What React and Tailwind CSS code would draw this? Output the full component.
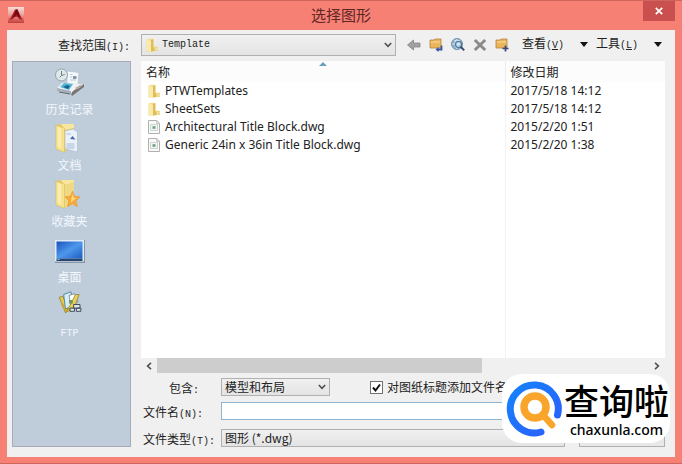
import React from "react";

const CJK = "font-['Noto_Sans_CJK_SC',sans-serif]";
const MONO = "font-['Liberation_Mono','Noto_Sans_CJK_SC',monospace] text-[10px]";
const LATIN = "font-['Noto_Sans','Noto_Sans_CJK_SC',sans-serif]";

function Mono({ children }) {
  return <span className={MONO}>{children}</span>;
}

function AppLogo() {
  return (
    <svg viewBox="0 0 16 16" className="size-4" aria-hidden="true">
      <defs>
        <linearGradient id="logo" x1="0" y1="0" x2="0" y2="1">
          <stop offset="0" stopColor="#f7dcd8" />
          <stop offset="0.45" stopColor="#eba7a0" />
          <stop offset="1" stopColor="#c43c3c" />
        </linearGradient>
      </defs>
      <rect width="16" height="16" fill="url(#logo)" />
      <path d="M1.5 13 7 2.5h2.5l5 10.5-3.5-1-1-2.2H6.5L5 12Z" fill="#bd1822" />
      <path d="M8 2.5h1.5L12 10l-2 .5L8.5 7 7 10l-2 .5Z" fill="#6c0d16" />
    </svg>
  );
}

function Folder({ className = "" }) {
  return (
    <svg viewBox="0 0 14 14" className={"size-3.5 " + className} aria-hidden="true">
      <path d="M1.500 1.500 5 .8h3v8h5v4L6 13.500H1.500Z" fill="#f3dc89" />
      <path d="M5 2.500 8.500 1v8.500L13 10v2.500L6 13.500Z" fill="#e0bd55" />
      <path d="M9.500 9.800 13 10v2.500l-3.500.500Z" fill="#f0dda0" />
      <path d="M1.500 1.500 6 2.800v10.700l-4.500-1Z" fill="#f9ebaf" />
    </svg>
  );
}

function DwgFile() {
  return (
    <svg viewBox="0 0 14 14" className="size-3.5" aria-hidden="true">
      <path d="M1.500.5h8.200l2.800 2.800v10.200h-11Z" fill="#fafafa" stroke="#b0b0b0" />
      <path d="M9.700.5v2.800h2.800" fill="none" stroke="#bdbdbd" />
      <path d="M3.500 4.500h7v6h-7z" fill="#f1f5f2" stroke="#cdd5cf" />
      <path d="M5.500 6.200h3v2.600h-3Z" fill="#6fa085" />
    </svg>
  );
}

function Chevron({ className = "" }) {
  return (
    <svg viewBox="0 0 8 6" className={"pointer-events-none h-1.5 w-2 " + className} aria-hidden="true">
      <path d="m.8 1 3.200 3.400L7.200 1" fill="none" stroke="#505050" strokeWidth="1.600" />
    </svg>
  );
}

function HistoryIcon() {
  return (
    <svg viewBox="0 0 32 32" className="size-8" aria-hidden="true">
      <path d="M13 5 25 6.500l-1 12-11-1Z" fill="#f5f8fa" stroke="#b3bfca" strokeWidth=".7" />
      <path d="M16 8.500h2.500M16 11h2M16 14h6" stroke="#b9c8d4" />
      <path d="M19 10h3.500v3H19z" fill="#7d9ab3" />
      <path d="m3 22 5-5 17 1 5 1-11 9-14-2Z" fill="#eef2f5" />
      <path d="m19 25 11-7v3l-12 9-1-2Z" fill="#7b7371" />
      <path d="m21 22 5-3 3 .5-6 4Z" fill="#b5aca6" />
      <path d="m6 21 4-4 9 1-4 6Z" fill="#56b6d6" />
      <path d="m9 21 4-2 3 1-2 3Z" fill="#17638e" />
      <path d="m3 22 14 3v3L3 25Z" fill="#a4afba" />
      <path d="m5 26 11 2" stroke="#5b6670" />
      <circle cx="7.500" cy="9" r="6" fill="#dfe9ea" stroke="#93a4ad" />
      <path d="M7.500 5v4.500l3.200-1M7.500 9.500l-2 2" fill="none" stroke="#6d808a" />
    </svg>
  );
}

function BigFolder({ children }) {
  return (
    <svg viewBox="0 0 32 32" className="size-8" aria-hidden="true">
      <path d="m3 3 5-1 12 1v23l-11 4-6-3Z" fill="#e3c768" />
      <path d="M7 2h13v4l-9 2Z" fill="#f7e69c" />
      {children}
      <path d="m2 3 8.500 3v24.500L2 27Z" fill="#f6e18c" stroke="#d2b759" strokeWidth=".5" />
      <path d="m3.500 5 3.500 1.200v20L3.500 25Z" fill="#fcf2be" opacity=".7" />
    </svg>
  );
}

function DocumentsIcon() {
  return (
    <BigFolder>
      <path d="m11 9 8-2 4.500 3v20L11 27Z" fill="#eaf1fb" stroke="#a8b7cd" strokeWidth=".6" />
      <path d="M12.500 12h4M12.500 22h8M12.500 24h8M12.500 26h8" stroke="#a9bbd6" />
      <path d="m16 17 2.500-3 3 3.500Z" fill="#4568ad" />
    </BigFolder>
  );
}

function FavoritesIcon() {
  return (
    <BigFolder>
      <path d="M10 7 20 4v22l-10 4Z" fill="#efd985" />
      <path d="m18.500 13 2.200 5.300 5.600.5-4.200 3.900 1.400 6-5-3-5 3 1.200-6-3.700-3.900 5.300-.5Z" fill="#f7a93a" stroke="#e3952f" strokeWidth=".5" />
      <path d="m18.500 16 1.400 4 3 .2-3.400 1.800-2.600 2.700.3-3.200Z" fill="#ffdb7a" />
    </BigFolder>
  );
}

function DesktopIcon() {
  return (
    <svg viewBox="0 0 32 32" className="size-8" aria-hidden="true">
      <defs>
        <linearGradient id="desk" x1="0" y1="0" x2="1" y2="1">
          <stop offset="0" stopColor="#1d50c0" />
          <stop offset="0.5" stopColor="#4d98eb" />
          <stop offset="1" stopColor="#1e5cc6" />
        </linearGradient>
      </defs>
      <path d="M1 6h30v23H1Z" fill="#8696a8" />
      <path d="M1 6h29v21.500H1Z" fill="#e4edf5" />
      <path d="M2.500 7.500h26v17h-26Z" fill="url(#desk)" />
      <path d="M2.500 24.500h26V27h-26Z" fill="#244672" />
      <path d="M3.500 25.500h2" stroke="#83b8e6" />
    </svg>
  );
}

function FtpIcon() {
  return (
    <svg viewBox="0 0 32 32" className="size-8" aria-hidden="true">
      <path d="m4 8 4-1 6 12-3 6Z" fill="#e5c84e" stroke="#8b7a2a" strokeWidth=".8" />
      <path d="m9 5 8-3 3 15-9 4Z" fill="#d4edf6" stroke="#367795" strokeWidth=".9" />
      <path d="m15 6 6-2 4 9-8 5Z" fill="#fff" stroke="#5c7583" strokeWidth=".8" />
      <path d="m22 5 4 0-5 14-10 6 5-8Z" fill="#e8cf58" stroke="#8b7a2a" strokeWidth=".8" />
      <path d="m7 15 4 8 8-3" fill="none" stroke="#c9a634" strokeWidth="2.200" />
      <path d="M15 11h4v4h-4z" fill="#72975e" />
      <path d="M20 16h7v4h-7zM16 20h5v3.500h-5zM23 20h5v3.500h-5z" fill="#dfe6eb" stroke="#32404f" />
    </svg>
  );
}

function BackIcon() {
  return (
    <svg viewBox="0 0 16 16" className="size-4" aria-hidden="true">
      <path d="M1.500 8 7.500 3v3H14v4H7.500v3Z" fill="#a1a1a1" stroke="#858585" strokeWidth=".8" />
    </svg>
  );
}

function UpFolderIcon() {
  return (
    <svg viewBox="0 0 16 16" className="size-4" aria-hidden="true">
      <path d="M2 3h4l1-1h6v9H2Z" fill="#eab65b" stroke="#b78443" strokeWidth=".8" />
      <path d="M3 5h9" stroke="#f9dba0" />
      <path d="M13.500 8.500v4H9.500" fill="none" stroke="#3457a4" strokeWidth="1.800" />
      <path d="m10.500 10-3 2.500 3 2.500Z" fill="#3457a4" />
    </svg>
  );
}

function SearchWebIcon() {
  return (
    <svg viewBox="0 0 16 16" className="size-4" aria-hidden="true">
      <circle cx="7" cy="7" r="5.500" fill="#8eafc9" stroke="#6f92b0" />
      <path d="M4 4q3-2 6 0M2 7h9M7 2q-4 5 0 10" fill="none" stroke="#d9e9f3" strokeWidth=".9" />
      <circle cx="8.500" cy="7.500" r="3" fill="#d8eaf5" fillOpacity=".7" stroke="#4d769b" strokeWidth="1.200" />
      <path d="m10.700 9.800 3.500 3.600" stroke="#334e70" strokeWidth="2" />
    </svg>
  );
}

function DeleteIcon() {
  return (
    <svg viewBox="0 0 16 16" className="size-4" aria-hidden="true">
      <path d="m2.800 3 10.400 10M13.200 3 2.800 13" stroke="#8b8b8b" strokeWidth="3" />
    </svg>
  );
}

function NewFolderIcon() {
  return (
    <svg viewBox="0 0 16 16" className="size-4" aria-hidden="true">
      <path d="M2 3h4l1-1h6v9H2Z" fill="#eab65b" stroke="#b78443" strokeWidth=".8" />
      <path d="M3 5h9" stroke="#f9dba0" />
      <path d="M11.500 8.500v6M8.500 11.500h6" stroke="#3c4a77" strokeWidth="1.700" />
    </svg>
  );
}

function SiteBadge() {
  return (
    <div className="absolute right-3 bottom-5 flex h-[69px] w-[168px] items-center rounded-[20px] bg-white pl-1">
      <svg viewBox="0 0 58 58" className="size-[58px] shrink-0" aria-hidden="true">
        <defs>
          <linearGradient id="ring" x1="0" y1="0" x2="1" y2="1">
            <stop offset="0" stopColor="#1583fa" />
            <stop offset="1" stopColor="#2d5dfb" />
          </linearGradient>
        </defs>
        <path d="M51.500 35A24 24 0 1 0 35 52" fill="none" stroke="url(#ring)" strokeWidth="7" strokeLinecap="round" />
        <circle cx="29" cy="27" r="11" fill="none" stroke="#f9a52c" strokeWidth="7.500" />
        <path d="m37 35 9 10" stroke="#f9a52c" strokeWidth="6.500" strokeLinecap="round" />
      </svg>
      <div className="flex flex-col items-center whitespace-nowrap text-black">
        <span className={CJK + " text-[35px] leading-[42px] font-medium"}>查询啦</span>
        <span className={LATIN + " text-[14px] leading-[18px] font-medium"}>chaxunla.com</span>
      </div>
    </div>
  );
}

const places = [
  { label: "历史记录", Icon: HistoryIcon },
  { label: "文档", Icon: DocumentsIcon },
  { label: "收藏夹", Icon: FavoritesIcon },
  { label: "桌面", Icon: DesktopIcon },
  { label: "FTP", Icon: FtpIcon, mono: true },
];

const tools = [
  { label: "返回", Icon: BackIcon },
  { label: "上一级", Icon: UpFolderIcon },
  { label: "搜索 Web", Icon: SearchWebIcon },
  { label: "删除", Icon: DeleteIcon },
  { label: "创建新文件夹", Icon: NewFolderIcon },
];

const files = [
  { name: "PTWTemplates", date: "2017/5/18 14:12", Icon: Folder },
  { name: "SheetSets", date: "2017/5/18 14:12", Icon: Folder },
  { name: "Architectural Title Block.dwg", date: "2015/2/20 1:51", Icon: DwgFile },
  { name: "Generic 24in x 36in Title Block.dwg", date: "2015/2/20 1:38", Icon: DwgFile },
];

const selectBox =
  "block w-full appearance-none rounded-none border border-[#b0b0b0] bg-linear-to-b from-[#f0f0f0] to-[#e4e4e4] text-[#222]";

function MenuButton({ text, accessKey }) {
  return (
    <button type="button" className="flex items-center whitespace-nowrap">
      <span>
        {text}
        <Mono>
          (<u>{accessKey}</u>)
        </Mono>
      </span>
      <svg viewBox="0 0 8 5" className="ml-4 h-[5px] w-2" aria-hidden="true">
        <path d="M0 0h8L4 5Z" fill="#111" />
      </svg>
    </button>
  );
}

export default function App() {
  return (
    <div className={CJK + " relative flex min-h-screen flex-col border-y border-[#cf665d] bg-[#f58073] px-[7px] text-[12px] leading-4 text-[#222]"}>
      <header className="flex h-[29px] shrink-0 items-start">
        <div className="w-8 pt-[6px] pl-px">
          <AppLogo />
        </div>
        <h1 className="flex-1 pt-1 text-center text-[15px] leading-5 text-[#5e2525]">选择图形</h1>
        <button type="button" aria-label="关闭" className="flex h-5 w-8 items-center justify-center bg-[#c9504e]">
          <svg viewBox="0 0 8 8" className="size-2" aria-hidden="true">
            <path d="m.8.8 6.400 6.400M7.200.8.8 7.200" stroke="#fff" strokeWidth="1.700" />
          </svg>
        </button>
      </header>

      <main className="mb-[6px] flex flex-1 flex-col bg-[#f0f0f0] pr-[10px] pb-[10px] pl-[5px]">
        <div className="flex h-[31px] items-center pb-[2px]">
          <label htmlFor="look" className="w-[129px] shrink-0 pt-1 pl-[46px] whitespace-nowrap">
            查找范围<Mono>(I):</Mono>
          </label>
          <div className="relative min-w-0 flex-1">
            <select id="look" className={selectBox + " h-[22px] pl-5 " + MONO}>
              <option>Template</option>
            </select>
            <Folder className="pointer-events-none absolute top-1 left-1" />
            <Chevron className="absolute top-2 right-1" />
          </div>
          <div className="ml-[10px] flex gap-[6px]">
            {tools.map(({ label, Icon }) => (
              <button key={label} type="button" aria-label={label}>
                <Icon />
              </button>
            ))}
          </div>
          <div className="mr-[3px] ml-3 flex gap-2">
            <MenuButton text="查看" accessKey="V" />
            <MenuButton text="工具" accessKey="L" />
          </div>
        </div>

        <div className="flex flex-1">
          <nav className="mr-[10px] flex w-[119px] shrink-0 flex-col border border-[#a9aab9] bg-[#bfcddb] pt-1">
            {places.map(({ label, Icon, mono }) => (
              <button key={label} type="button" className="flex h-14 flex-col items-center gap-[3px] pr-1 text-[#f3f7fb]">
                <Icon />
                <span className={mono ? MONO + " leading-6" : "leading-4"}>{label}</span>
              </button>
            ))}
          </nav>

          <div className="flex min-w-0 flex-1 flex-col">
            <div className="relative flex flex-1 bg-white">
              <svg viewBox="0 0 8 4" className="absolute top-px left-[178px] h-1 w-2" aria-hidden="true">
                <path d="M0 4 4 0l4 4Z" fill="#6aa0c0" />
              </svg>
              <table className={LATIN + " h-full w-full table-fixed border-collapse text-left"}>
                <colgroup>
                  <col />
                  <col className="w-40" />
                </colgroup>
                <thead className={CJK + " bg-[#fcfcfc]"}>
                  <tr className="h-[21px]">
                    <th className="p-0 pl-[5px] font-normal">名称</th>
                    <th className="border-l border-[#ececec] p-0 pl-[5px] font-normal">修改日期</th>
                  </tr>
                </thead>
                <tbody>
                  {files.map(({ name, date, Icon }) => (
                    <tr key={name} className="h-[18px]">
                      <td className="p-0 pl-[6px]">
                        <span className="flex items-center gap-1 whitespace-nowrap">
                          <Icon />
                          {name}
                        </span>
                      </td>
                      <td className="border-l border-[#f3f3f3] p-0 pl-[5px] whitespace-nowrap">{date}</td>
                    </tr>
                  ))}
                  <tr>
                    <td className="p-0" />
                    <td className="border-l border-[#f3f3f3] p-0" />
                  </tr>
                </tbody>
              </table>
            </div>

            <div className="flex h-[15px] items-center">
              <button type="button" aria-label="向左滚动" className="flex w-4 justify-center">
                <Chevron className="rotate-90" />
              </button>
              <div className="h-full flex-1">
                <div className="h-full w-[66%] bg-[#cdcdcd]" />
              </div>
              <button type="button" aria-label="向右滚动" className="flex w-4 justify-center">
                <Chevron className="-rotate-90" />
              </button>
            </div>

            <div className="mt-[5px] flex h-[18px] items-center">
              <label htmlFor="include" className="w-20 shrink-0 pt-1 pl-7">
                包含<Mono>:</Mono>
              </label>
              <div className="relative w-[109px]">
                <select id="include" className={selectBox + " h-[18px] pl-[3px]"}>
                  <option>模型和布局</option>
                </select>
                <Chevron className="absolute top-[6px] right-1" />
              </div>
              <label className="ml-10 flex items-center gap-1 whitespace-nowrap">
                <span className="relative flex">
                  <input
                    type="checkbox"
                    defaultChecked
                    className="peer size-[13px] appearance-none border border-[#707070] bg-white"
                  />
                  <svg
                    viewBox="0 0 13 13"
                    className="pointer-events-none absolute inset-0 hidden size-[13px] peer-checked:block"
                    aria-hidden="true"
                  >
                    <path d="m3 6.500 2.500 3L10 3.500" fill="none" stroke="#111" strokeWidth="2" />
                  </svg>
                </span>
                对图纸标题添加文件名作
              </label>
            </div>

            <div className="mt-[6px] flex h-[18px] items-center">
              <label htmlFor="filename" className="w-20 shrink-0 pt-1 pl-[2px] whitespace-nowrap">
                文件名<Mono>(N):</Mono>
              </label>
              <input id="filename" type="text" className="mr-[100px] h-[18px] min-w-0 flex-1 border border-[#8fb4cf] bg-white px-1" />
            </div>

            <div className="mt-[9px] flex h-[18px] items-center">
              <label htmlFor="filetype" className="w-20 shrink-0 pt-1 pl-[2px] whitespace-nowrap">
                文件类型<Mono>(T):</Mono>
              </label>
              <div className="min-w-0 flex-1">
                <select id="filetype" className={selectBox + " h-[18px] pl-[3px]"}>
                  <option>图形 (*.dwg)</option>
                </select>
              </div>
              <button
                type="button"
                aria-label="取消"
                className="ml-[14px] h-[18px] w-[86px] shrink-0 border border-[#b0b0b0] bg-[#e8e8e8]"
              />
            </div>
          </div>
        </div>
      </main>
      <SiteBadge />
    </div>
  );
}
